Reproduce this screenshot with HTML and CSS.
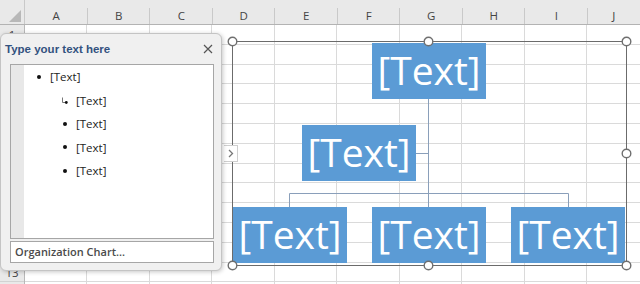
FILE: index.html
```html
<!DOCTYPE html>
<html>
<head>
<meta charset="utf-8">
<link rel="stylesheet" href="styles.css">
</head>
<body>
<div class="app">
  <div class="colhead">
    <div class="corner"><svg width="12" height="12" viewBox="0 0 12 12"><path d="M12 0 L12 12 L0 12 Z" fill="#b8b8b8"/></svg></div>
    <div class="col">A</div>
    <div class="col">B</div>
    <div class="col">C</div>
    <div class="col">D</div>
    <div class="col">E</div>
    <div class="col">F</div>
    <div class="col">G</div>
    <div class="col">H</div>
    <div class="col">I</div>
    <div class="col last">J</div>
  </div>
  <div class="sheet">
    <div class="rowhead">
      <div class="rn">1</div><div class="rn"></div><div class="rn"></div><div class="rn"></div>
      <div class="rn"></div><div class="rn"></div><div class="rn"></div><div class="rn"></div>
      <div class="rn"></div><div class="rn"></div><div class="rn"></div><div class="rn"></div>
      <div class="rn">13</div>
    </div>
    <div class="cells"></div>
  </div>

  <div class="smart">
    <svg class="connectors" width="393" height="223" viewBox="0 0 393 223">
      <g stroke="#8a9fba" stroke-width="1" fill="none">
        <path d="M195.5 57 V165"/>
        <path d="M183 111.5 H195.5"/>
        <path d="M56.5 151.5 H335.5"/>
        <path d="M56.5 151.5 V165"/>
        <path d="M335.5 151.5 V165"/>
      </g>
    </svg>
    <div class="node n-top">[Text]</div>
    <div class="node n-mid">[Text]</div>
    <div class="node n-b1">[Text]</div>
    <div class="node n-b2">[Text]</div>
    <div class="node n-b3">[Text]</div>
    <svg class="handles" width="408" height="238" viewBox="0 0 408 238">
      <g fill="#fff" stroke="#6f6f6f" stroke-width="1.4">
        <circle cx="6.5" cy="6.5" r="4.3"/>
        <circle cx="202.5" cy="6.5" r="4.3"/>
        <circle cx="400.5" cy="6.5" r="4.3"/>
        <circle cx="400.5" cy="118.5" r="4.3"/>
        <circle cx="6.5" cy="118.5" r="4.3"/>
        <circle cx="6.5" cy="230.5" r="4.3"/>
        <circle cx="202.5" cy="230.5" r="4.3"/>
        <circle cx="400.5" cy="230.5" r="4.3"/>
      </g>
    </svg>
  </div>

  <div class="expander"><svg width="6" height="9" viewBox="0 0 6 9"><path d="M1 1 L4.5 4.5 L1 8" fill="none" stroke="#777" stroke-width="1.3"/></svg></div>

  <div class="pane">
    <div class="titlebar">
      <span class="title">Type your text here</span>
      <svg class="close" width="10" height="10" viewBox="0 0 10 10"><path d="M1 1 L9 9 M9 1 L1 9" stroke="#555" stroke-width="1.2" fill="none"/></svg>
    </div>
    <div class="editor">
      <div class="strip"></div>
      <ul class="list">
        <li class="l1"><span class="dot"></span>[Text]</li>
        <li class="l2"><svg class="tabmark" width="7" height="8" viewBox="0 0 7 8"><path d="M1.5 0.5 V5.5 H4" stroke="#777" stroke-width="1" fill="none"/><circle cx="5.3" cy="5.5" r="1.4" fill="#111"/></svg>[Text]</li>
        <li class="l2"><span class="dot"></span>[Text]</li>
        <li class="l2"><span class="dot"></span>[Text]</li>
        <li class="l2"><span class="dot"></span>[Text]</li>
      </ul>
    </div>
    <div class="footer">Organization Chart...</div>
  </div>
</div>
</body>
</html>
```

FILE: styles.css
```css
* { box-sizing: border-box; }
html, body { margin: 0; padding: 0; }
body {
  width: 640px;
  height: 284px;
  overflow: hidden;
  background: #fff;
  font-family: "Open Sans", "Liberation Sans", sans-serif;
}
.app {
  position: relative;
  width: 640px;
  height: 284px;
  overflow: hidden;
}

/* column headers */
.colhead {
  display: flex;
  height: 25px;
  background: #e9e9e9;
  border-bottom: 1px solid #b3b3b3;
}
.corner {
  width: 25px;
  flex: none;
  display: flex;
  align-items: flex-end;
  justify-content: flex-end;
  padding: 0 3px 2px 0;
  border-right: 1px solid #c9c9c9;
}
.col {
  width: 62.5px;
  flex: none;
  text-align: center;
  font-size: 11.5px;
  color: #444;
  padding-top: 7px;
  line-height: 17px;
  background: linear-gradient(#c9c9c9, #c9c9c9) right bottom / 1px 16px no-repeat;
}
.col.last { flex: 1; background: none; }

/* grid */
.sheet {
  display: flex;
  height: 259px;
}
.rowhead {
  width: 25px;
  flex: none;
  background: #e9e9e9;
  border-right: 1px solid #b8b8b8;
}
.rn {
  height: 19.8px;
  border-bottom: 1px solid #d2d2d2;
  font-size: 11.5px;
  color: #444;
  text-align: center;
  line-height: 19px;
}
.cells {
  flex: 1;
  background:
    repeating-linear-gradient(to right, transparent 0 61.5px, #dadada 61.5px 62.5px),
    repeating-linear-gradient(to bottom, transparent 0 18.8px, #dadada 18.8px 19.8px);
}

/* SmartArt */
.smart {
  position: absolute;
  left: 232px;
  top: 41px;
  width: 395px;
  height: 225px;
  border: 1px solid #6b6b6b;
}
.connectors {
  position: absolute;
  left: 0;
  top: 0;
}
.handles {
  position: absolute;
  left: -7px;
  top: -7px;
  overflow: visible;
}
.node {
  position: absolute;
  width: 114px;
  height: 56px;
  background: #5b9bd5;
  color: #fff;
  font-family: "Open Sans", "Liberation Sans", sans-serif;
  font-size: 39px;
  line-height: 1;
  display: flex;
  align-items: center;
  justify-content: center;
  padding-bottom: 3px;
}
.n-top { left: 139px; top: 1px; }
.n-mid { left: 69px; top: 83px; }
.n-b1 { left: 0; top: 165px; }
.n-b2 { left: 139px; top: 165px; }
.n-b3 { left: 278px; top: 165px; }

.expander {
  position: absolute;
  left: 224px;
  top: 145px;
  width: 14px;
  height: 17px;
  background: #fff;
  border: 1px solid #cfcfcf;
  border-left: none;
  display: flex;
  align-items: center;
  justify-content: center;
}

/* text pane */
.pane {
  position: absolute;
  left: 0;
  top: 33px;
  width: 222px;
  height: 238px;
  background: #f0f0f0;
  border: 1px solid #c4c4c4;
  border-radius: 6px;
  box-shadow: 1px 1px 4px rgba(0, 0, 0, 0.22);
  display: flex;
  flex-direction: column;
}
.titlebar {
  height: 30px;
  flex: none;
  display: flex;
  align-items: center;
  justify-content: space-between;
  padding: 0 8px 1px 4px;
}
.title {
  font-family: "Liberation Sans", Arial, sans-serif;
  font-weight: bold;
  font-size: 11.5px;
  color: #33527f;
}
.editor {
  height: 175px;
  flex: none;
  margin: 0 7px 0 9px;
  border: 1px solid #a6a6a6;
  background: #fff;
  display: flex;
}
.strip {
  width: 13px;
  flex: none;
  background: #e8e8e8;
}
.list {
  flex: 1;
  list-style: none;
  margin: 0;
  padding: 0;
}
.list li {
  display: flex;
  align-items: center;
  height: 23.5px;
  font-size: 11.5px;
  color: #222;
}
.list li.l1 { padding-left: 13px; }
.list li.l2 { padding-left: 39px; }
.dot {
  width: 4px;
  height: 4px;
  border-radius: 50%;
  background: #111;
  margin-right: 9px;
}
.tabmark {
  margin-left: -2px;
  margin-right: 8px;
  margin-top: 2px;
}
.footer {
  height: 22px;
  flex: none;
  margin: 2px 7px 0 9px;
  border: 1px solid #a6a6a6;
  background: #fff;
  padding-left: 4px;
  font-size: 11px;
  font-weight: 600;
  color: #4a4a4a;
  line-height: 20px;
}
```
